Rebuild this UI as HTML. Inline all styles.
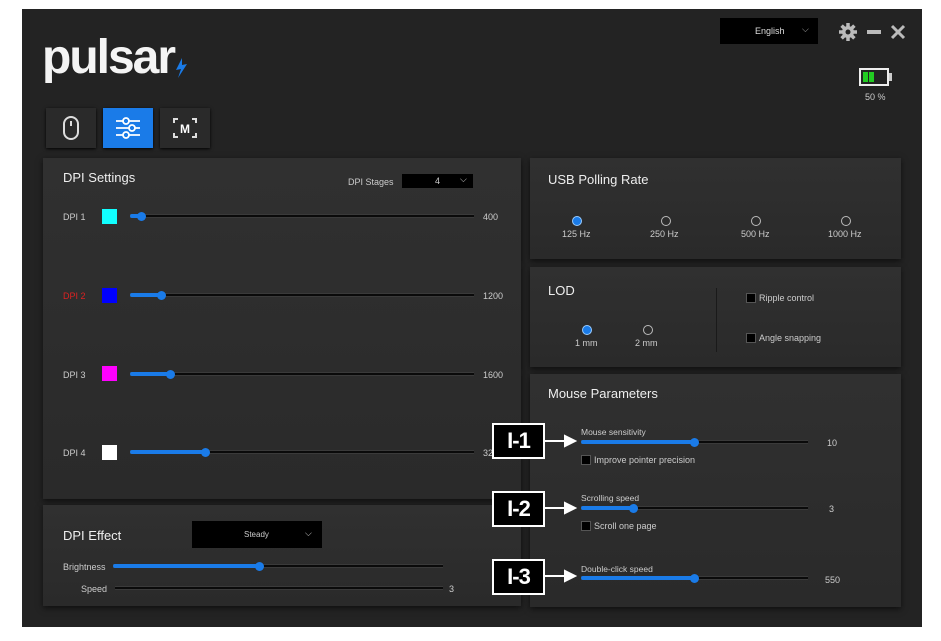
<!DOCTYPE html>
<html><head><meta charset="utf-8"><style>
*{margin:0;padding:0;box-sizing:border-box}
body{width:941px;height:641px;background:#fff;position:relative;overflow:hidden;font-family:"Liberation Sans",Arial,sans-serif;color:#ddd}
.a{position:absolute}
#app{left:22px;top:9px;width:900px;height:618px;background:#232323}
.p{position:absolute;background:linear-gradient(#303030,#2a2a2a);box-shadow:0 2px 6px rgba(0,0,0,.6)}
.t{font-size:13px;color:#eee}
.s{font-size:9px;color:#ccc}
.tr{position:absolute;height:4px;background:#0a0a0a;border-top:1px solid #3a3a3a;border-bottom:1px solid #3a3a3a}
.f{position:absolute;height:4px;background:#1a7be8;border-radius:2px}
.th{position:absolute;width:9px;height:9px;border-radius:50%;background:#1a7be8}
.sw{position:absolute;width:15px;height:15px}
.rb{position:absolute;width:10px;height:10px;border-radius:50%;border:1.5px solid #bbb}
.rb.on{background:#1a7be8;border-color:#9cf}
.cb{position:absolute;width:10px;height:10px;background:#000;border:1px solid #555}
.box{position:absolute;width:53px;height:36px;background:#000;border:2px solid #fff;color:#fff;font-weight:bold;font-size:22px;text-align:center;line-height:32px;letter-spacing:-1px}
.tab{position:absolute;top:108px;width:50px;height:40px;background:#2a2a2a;box-shadow:0 1px 3px #000}
</style></head><body>
<div id="app" class="a"></div>
<!-- logo -->
<div class="a" style="left:42px;top:30px;font-size:48px;font-weight:bold;color:#f4f4f4;letter-spacing:-2px">pulsar</div>
<svg class="a" style="left:174px;top:58px" width="14" height="20"><path d="M8 0 L2 12 L7 11 L4 20 L13 6 L8 7 Z" fill="#1a7be8"/></svg>
<!-- tabs -->
<div class="tab" style="left:46px"><svg width="50" height="40"><rect x="18" y="9" width="14" height="22" rx="7" fill="none" stroke="#ddd" stroke-width="2"/><line x1="25" y1="13" x2="25" y2="18" stroke="#ddd" stroke-width="2"/></svg></div>
<div class="tab" style="left:103px;background:#1a7be8"><svg width="50" height="40"><g stroke="#fff" stroke-width="1.8" fill="#1a7be8"><line x1="13" y1="13" x2="37" y2="13"/><line x1="13" y1="20" x2="37" y2="20"/><line x1="13" y1="27" x2="37" y2="27"/><circle cx="23" cy="13" r="3"/><circle cx="29" cy="20" r="3"/><circle cx="23" cy="27" r="3"/></g></svg></div>
<div class="tab" style="left:160px"><svg width="50" height="40"><g stroke="#ddd" stroke-width="2" fill="none"><path d="M14 15V11H18M32 11H36V15M36 25V29H32M18 29H14V25"/></g><text x="25" y="25" font-size="12" font-weight="bold" fill="#fff" text-anchor="middle" font-family="Liberation Sans">M</text></svg></div>
<!-- top right -->
<div class="a" style="left:720px;top:18px;width:98px;height:26px;background:#000"><span class="a s" style="left:35px;top:8px;color:#ddd">English</span><span class="a s" style="left:82px;top:6px;color:#aaa">⌵</span></div>
<svg class="a" style="left:838px;top:22px" width="20" height="20"><g fill="#bbb"><circle cx="10" cy="10" r="6"/><g stroke="#bbb" stroke-width="3.5"><line x1="10" y1="1" x2="10" y2="19"/><line x1="1" y1="10" x2="19" y2="10"/><line x1="3.6" y1="3.6" x2="16.4" y2="16.4"/><line x1="16.4" y1="3.6" x2="3.6" y2="16.4"/></g></g><circle cx="10" cy="10" r="2.5" fill="#232323"/></svg>
<div class="a" style="left:867px;top:30px;width:14px;height:4px;background:#bbb"></div>
<svg class="a" style="left:890px;top:24px" width="16" height="16"><g stroke="#bbb" stroke-width="3"><line x1="2" y1="2" x2="14" y2="14"/><line x1="14" y1="2" x2="2" y2="14"/></g></svg>
<div class="a" style="left:859px;top:68px;width:30px;height:18px;border:2px solid #eee"><div class="a" style="left:2px;top:2px;width:5px;height:10px;background:#2c2"></div><div class="a" style="left:8px;top:2px;width:5px;height:10px;background:#2c2"></div></div>
<div class="a" style="left:889px;top:73px;width:3px;height:8px;background:#ccc"></div>
<div class="a s" style="left:865px;top:92px">50 %</div>
<!-- DPI settings -->
<div class="p" style="left:43px;top:158px;width:478px;height:341px"></div>
<div class="a t" style="left:63px;top:170px">DPI Settings</div>
<div class="a s" style="left:348px;top:177px">DPI Stages</div>
<div class="a" style="left:402px;top:174px;width:71px;height:14px;background:#000"><span class="a s" style="left:33px;top:2px">4</span><span class="a s" style="left:58px;top:0">⌵</span></div>
<div class="a s" style="left:63px;top:212px">DPI 1</div><div class="sw" style="left:102px;top:209px;background:#1ff"></div>
<div class="tr" style="left:130px;top:214px;width:344px"></div><div class="f" style="left:130px;top:214px;width:12px"></div><div class="th" style="left:137px;top:212px"></div><div class="a s" style="left:483px;top:212px">400</div>
<div class="a s" style="left:63px;top:291px;color:#d22">DPI 2</div><div class="sw" style="left:102px;top:288px;background:#00f"></div>
<div class="tr" style="left:130px;top:293px;width:344px"></div><div class="f" style="left:130px;top:293px;width:32px"></div><div class="th" style="left:157px;top:291px"></div><div class="a s" style="left:483px;top:291px">1200</div>
<div class="a s" style="left:63px;top:370px">DPI 3</div><div class="sw" style="left:102px;top:366px;background:#f0f"></div>
<div class="tr" style="left:130px;top:372px;width:344px"></div><div class="f" style="left:130px;top:372px;width:42px"></div><div class="th" style="left:166px;top:370px"></div><div class="a s" style="left:483px;top:370px">1600</div>
<div class="a s" style="left:63px;top:448px">DPI 4</div><div class="sw" style="left:102px;top:445px;background:#fff"></div>
<div class="tr" style="left:130px;top:450px;width:344px"></div><div class="f" style="left:130px;top:450px;width:77px"></div><div class="th" style="left:201px;top:448px"></div><div class="a s" style="left:483px;top:448px">3200</div>
<!-- DPI effect -->
<div class="p" style="left:43px;top:505px;width:478px;height:101px"></div>
<div class="a t" style="left:63px;top:528px">DPI Effect</div>
<div class="a" style="left:192px;top:521px;width:130px;height:27px;background:#000"><span class="a s" style="left:52px;top:9px;font-size:8px">Steady</span><span class="a s" style="left:113px;top:7px">⌵</span></div>
<div class="a s" style="left:63px;top:562px">Brightness</div>
<div class="tr" style="left:113px;top:564px;width:330px"></div><div class="f" style="left:113px;top:564px;width:148px"></div><div class="th" style="left:255px;top:562px"></div>
<div class="a s" style="left:81px;top:584px">Speed</div>
<div class="tr" style="left:115px;top:586px;width:328px"></div><div class="a s" style="left:449px;top:584px">3</div>
<!-- USB -->
<div class="p" style="left:530px;top:158px;width:371px;height:101px"></div>
<div class="a t" style="left:548px;top:172px">USB Polling Rate</div>
<div class="rb on" style="left:572px;top:216px"></div><div class="a s" style="left:562px;top:229px">125 Hz</div>
<div class="rb" style="left:661px;top:216px"></div><div class="a s" style="left:650px;top:229px">250 Hz</div>
<div class="rb" style="left:751px;top:216px"></div><div class="a s" style="left:741px;top:229px">500 Hz</div>
<div class="rb" style="left:841px;top:216px"></div><div class="a s" style="left:828px;top:229px">1000 Hz</div>
<!-- LOD -->
<div class="p" style="left:530px;top:267px;width:371px;height:100px"></div>
<div class="a t" style="left:548px;top:283px">LOD</div>
<div class="a" style="left:716px;top:288px;width:1px;height:64px;background:#1a1a1a"></div>
<div class="rb on" style="left:582px;top:325px"></div><div class="a s" style="left:575px;top:338px">1 mm</div>
<div class="rb" style="left:643px;top:325px"></div><div class="a s" style="left:635px;top:338px">2 mm</div>
<div class="cb" style="left:746px;top:293px"></div><div class="a s" style="left:759px;top:293px">Ripple control</div>
<div class="cb" style="left:746px;top:333px"></div><div class="a s" style="left:759px;top:333px">Angle snapping</div>
<!-- Mouse params -->
<div class="p" style="left:530px;top:374px;width:371px;height:233px"></div>
<div class="a t" style="left:548px;top:386px">Mouse Parameters</div>
<div class="a s" style="left:581px;top:427px;font-size:8.5px">Mouse sensitivity</div>
<div class="tr" style="left:581px;top:440px;width:227px"></div><div class="f" style="left:581px;top:440px;width:116px"></div><div class="th" style="left:690px;top:438px"></div><div class="a s" style="left:827px;top:438px">10</div>
<div class="cb" style="left:581px;top:455px"></div><div class="a s" style="left:594px;top:455px">Improve pointer precision</div>
<div class="a s" style="left:581px;top:493px;font-size:8.5px">Scrolling speed</div>
<div class="tr" style="left:581px;top:506px;width:227px"></div><div class="f" style="left:581px;top:506px;width:54px"></div><div class="th" style="left:629px;top:504px"></div><div class="a s" style="left:829px;top:504px">3</div>
<div class="cb" style="left:581px;top:521px"></div><div class="a s" style="left:594px;top:521px">Scroll one page</div>
<div class="a s" style="left:581px;top:564px;font-size:8.5px">Double-click speed</div>
<div class="tr" style="left:581px;top:576px;width:227px"></div><div class="f" style="left:581px;top:576px;width:116px"></div><div class="th" style="left:690px;top:574px"></div><div class="a s" style="left:825px;top:575px">550</div>
<!-- annotations -->
<div class="box" style="left:492px;top:423px">I-1</div>
<div class="box" style="left:492px;top:491px">I-2</div>
<div class="box" style="left:492px;top:559px">I-3</div>
<svg class="a" style="left:545px;top:430px" width="32" height="160"><g fill="#fff" stroke="#fff" stroke-width="2"><line x1="0" y1="11" x2="20" y2="11"/><path d="M20 6L30 11L20 16Z"/><line x1="0" y1="78" x2="20" y2="78"/><path d="M20 73L30 78L20 83Z"/><line x1="0" y1="146" x2="20" y2="146"/><path d="M20 141L30 146L20 151Z"/></g></svg>
</body></html>
